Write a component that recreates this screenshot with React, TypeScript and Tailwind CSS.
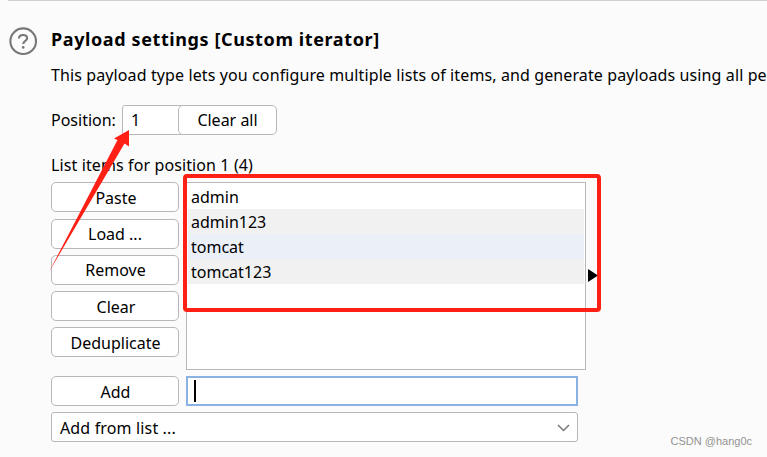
import React from "react";

const buttonBase =
  "flex shrink-0 items-center justify-center rounded-[5px] border border-[#bab5b8] bg-white whitespace-pre";

function SideButton({ label, style = "pt-[2px]" }: { label: string; style?: string }) {
  return <button className={`${buttonBase} h-[30px] w-32 ${style}`}>{label}</button>;
}

const items = [
  { text: "admin", style: "bg-white" },
  { text: "admin123", style: "bg-[#f1f1f1]" },
  { text: "tomcat", style: "bg-[#eaeff8]" },
  { text: "tomcat123", style: "bg-[#f1f1f1]" },
];

function Annotations() {
  return (
    <>
      <div className="absolute top-[174px] left-[183px] h-[138px] w-[418px] rounded-[4px] border-4 border-[#ff2015]" />
      <svg className="pointer-events-none absolute top-0 left-0" width="767" height="457" viewBox="0 0 767 457">
        <path d="M129 130 L129 146.5 L124.5 143.5 L49 272 L117.5 140 L114 138.5 Z" fill="#ff2015" />
      </svg>
    </>
  );
}

export default function App() {
  return (
    <div className="relative h-[457px] w-[767px] overflow-hidden bg-[#fbfbfb] font-['Noto_Sans','Open_Sans',sans-serif] text-[16px] leading-6 text-black">
      <div className="ml-2 h-px bg-[#cfcfcf]" />
      <div className="flex pl-2">
        <svg className="mt-[25px] shrink-0" width="30" height="30" viewBox="0 0 30 30" fill="none" stroke="#777" strokeWidth="2.1">
          <circle cx="15.2" cy="15.2" r="12.8" />
          <path d="M10.9 12.6 C10.9 7.8 19.2 7.8 19.2 12.2 C19.2 14.9 15.2 14.8 15.2 18" />
          <circle cx="15.2" cy="21.4" r="1.3" fill="#777" stroke="none" />
        </svg>
        <div className="ml-[13px] flex shrink-0 flex-col items-start">
          <h1 className="mt-[26px] h-6 text-[18px] font-bold tracking-[0.6px] whitespace-nowrap">Payload settings [Custom iterator]</h1>
          <p className="mt-3 h-6 tracking-[0.11px] whitespace-nowrap">
            This payload type lets you configure multiple lists of items, and generate payloads using all pe
          </p>
          <div className="mt-[18px] flex h-[30px] items-center">
            <label className="w-[71px] whitespace-nowrap">Position:</label>
            <div className="flex h-[30px] w-[60px] items-center rounded-l-[3px] border border-[#bab5b8] bg-white pl-2">1</div>
            <button className={`${buttonBase} relative -ml-1 h-[30px] w-[99px]`}>Clear all</button>
          </div>
          <div className="mt-[18px] h-6 tracking-[0.11px] whitespace-nowrap">List items for position 1 (4)</div>
          <div className="mt-[5px] flex gap-[7px]">
            <div className="flex flex-col gap-[6px]">
              <SideButton label="Paste" style="mb-px pt-[2px] pl-[2px]" />
              <SideButton label="Load ..." style="" />
              <SideButton label="Remove" style="pl-px" />
              <SideButton label="Clear" style="pt-[2px] pl-[2px]" />
              <SideButton label="Deduplicate" style="pt-[2px] pl-px" />
            </div>
            <div className="h-[188px] w-[400px] border border-[#bab5b8] bg-white p-px">
              {items.map((item) => (
                <div key={item.text} className={`h-[25px] pl-[3px] leading-[26px] ${item.style}`}>{item.text}</div>
              ))}
            </div>
            <div className="-ml-[5px] flex w-[10px] pt-[87px]">
              <svg width="10" height="13" viewBox="0 0 10 13"><path d="M0 0 L10 6.5 L0 13 Z" fill="#000" /></svg>
            </div>
          </div>
          <div className="mt-[6px] flex gap-[7px]">
            <SideButton label="Add" style="pt-[2px] pl-px" />
            <div className="flex h-[30px] w-[392px] items-center border-2 border-[#8ab3e4] bg-white pl-[6px]">
              <span className="h-[22px] w-[2px] bg-black" />
            </div>
          </div>
          <div className="mt-[6px] flex h-[30px] w-[527px] items-center justify-between rounded-[3px] border border-[#bab5b8] bg-white pr-[7px] pl-2">
            <span className="pt-[2px] tracking-[0.15px]">Add from list ...</span>
            <svg className="mt-[2px]" width="13" height="8" viewBox="0 0 13 8" fill="none" stroke="#777" strokeWidth="1.5"><path d="M1 1 L6.5 6.5 L12 1" /></svg>
          </div>
        </div>
      </div>
      <Annotations />
      <span className="absolute right-[15px] bottom-[6px] font-['Liberation_Sans',sans-serif] text-[11px] leading-5 text-[#929292]">CSDN @hang0c</span>
    </div>
  );
}
